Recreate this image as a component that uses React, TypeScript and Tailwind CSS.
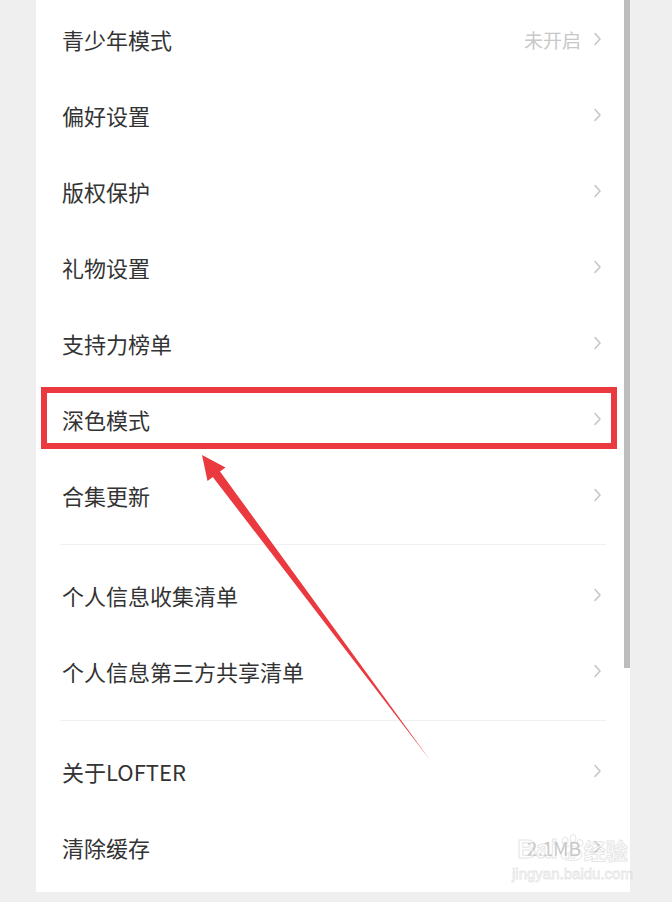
import React from "react";

// settings list, grouped; a divider sits between groups
const groups: { label: string; value?: string }[][] = [
  [
    { label: "青少年模式", value: "未开启" },
    { label: "偏好设置" },
    { label: "版权保护" },
    { label: "礼物设置" },
    { label: "支持力榜单" },
    { label: "深色模式" },
    { label: "合集更新" },
  ],
  [{ label: "个人信息收集清单" }, { label: "个人信息第三方共享清单" }],
  [{ label: "关于LOFTER" }, { label: "清除缓存", value: "2.1MB" }],
];

function Chevron() {
  return (
    <svg width="9" height="14" viewBox="0 0 9 14" className="shrink-0">
      <path d="M2 1.5 L7 7 L2 12.5" fill="none" stroke="#c6c6c6" strokeWidth="1.6" strokeLinecap="round" strokeLinejoin="round" />
    </svg>
  );
}

function Row({ label, value }: { label: string; value?: string }) {
  return (
    <div className="flex h-[76px] items-center justify-between pl-[26px] pr-[28px]">
      <span className="text-[22px] leading-none text-[#333333]">{label}</span>
      <div className="flex items-center gap-[12px]">
        {value && <span className="text-[19px] leading-none text-[#c8c8c8]">{value}</span>}
        <Chevron />
      </div>
    </div>
  );
}

export default function App() {
  return (
    <div
      className="relative h-[902px] w-[672px] overflow-hidden bg-[#efefef]"
      style={{ fontFamily: '"Noto Sans CJK SC", "Noto Sans", sans-serif' }}
    >
      <div className="ml-[36px] w-[594px] bg-white pt-[1px] pb-[7px]">
        {groups.map((g, i) => (
          <div key={i}>
            {i > 0 && (
              <div className="py-[11px] pb-[12px] px-[24px]">
                <div className="h-px bg-[#f0f0f0]" />
              </div>
            )}
            {g.map((r) => (
              <Row key={r.label} label={r.label} value={r.value} />
            ))}
          </div>
        ))}
      </div>

      {/* scrollbar thumb */}
      <div className="absolute left-[624px] top-0 h-[668px] w-[6px] bg-[#bdbdbd]" />

      {/* highlight box */}
      <div className="absolute left-[41px] top-[387px] h-[62px] w-[576px] border-[6px] border-[#ea3a3f]" />

      {/* arrow */}
      <svg className="absolute left-0 top-0" width="672" height="902" viewBox="0 0 672 902">
        <polygon
          points="202,455 225.5,467.5 220,471.5 430,760 212.8,476.9 207.5,481"
          fill="#ea3a3f"
        />
      </svg>

      {/* watermark */}
      <div className="absolute left-[512px] top-[834px] flex flex-col items-center opacity-45">
        <div className="flex items-center leading-none">
          <span
            className="text-[26px] font-bold text-white"
            style={{ WebkitTextStroke: "1px #c8c8c8", fontFamily: '"Liberation Sans", sans-serif' }}
          >
            Bai
          </span>
          <svg width="28" height="30" viewBox="0 0 28 30" className="-mx-[1px]">
            <g fill="none" stroke="#c8c8c8" strokeWidth="1">
              <ellipse cx="8" cy="7" rx="3" ry="4" />
              <ellipse cx="16" cy="4.5" rx="3" ry="4" />
              <ellipse cx="23" cy="9" rx="3" ry="3.5" />
              <path d="M4 22 C4 14 10 12 14 12 C19 12 25 15 25 22 C25 28 4 28 4 22 Z" />
            </g>
            <text x="7.5" y="25" fontSize="10" fill="#c8c8c8" fontFamily="Liberation Sans">du</text>
          </svg>
          <span
            className="text-[22px] font-bold text-white"
            style={{ WebkitTextStroke: "1px #c8c8c8" }}
          >
            经验
          </span>
        </div>
        <span
          className="mt-[2px] text-[15px] leading-none text-white"
          style={{ WebkitTextStroke: "0.8px #c8c8c8", fontFamily: '"Liberation Sans", sans-serif' }}
        >
          jingyan.baidu.com
        </span>
      </div>
    </div>
  );
}
